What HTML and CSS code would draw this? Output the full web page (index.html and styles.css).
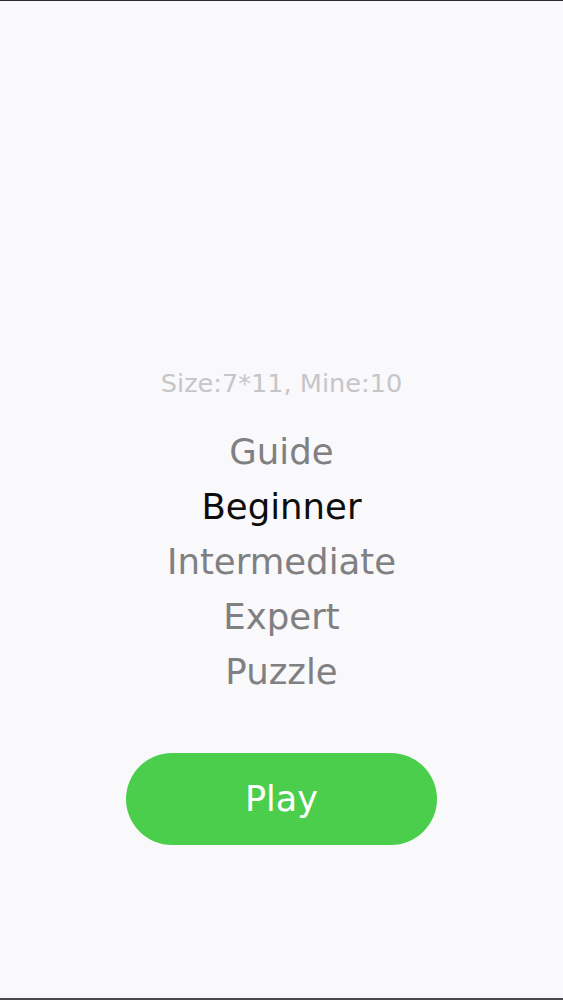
FILE: index.html
```html
<!DOCTYPE html>
<html>
<head>
<meta charset="utf-8">
<link rel="stylesheet" href="styles.css">
</head>
<body>
<div class="screen">
  <div class="info">Size:7*11, Mine:10</div>
  <ul class="levels">
    <li class="level">Guide</li>
    <li class="level active">Beginner</li>
    <li class="level">Intermediate</li>
    <li class="level">Expert</li>
    <li class="level">Puzzle</li>
  </ul>
  <button class="play">Play</button>
</div>
</body>
</html>
```
FILE: styles.css
```css
html, body {
  margin: 0;
  padding: 0;
  background: #f9f8fb;
}
.screen {
  height: 1000px;
  box-sizing: border-box;
  border-top: 1px solid #2c2c2e;
  border-bottom: 2px solid #4a4a4c;
  background: #f9f8fb;
  display: flex;
  flex-direction: column;
  align-items: center;
  padding-top: 367px;
  font-family: "DejaVu Sans", Verdana, sans-serif;
}
.info {
  font-size: 25.6px;
  line-height: 30px;
  color: #c6c6c8;
}
.levels {
  list-style: none;
  margin: 26px 0 0;
  padding: 0;
  text-align: center;
}
.level {
  font-size: 35.5px;
  line-height: 55px;
  color: #808082;
}
.level.active {
  color: #0d0d0d;
}
.play {
  margin-top: 54px;
  width: 311px;
  height: 92px;
  border: none;
  border-radius: 46px;
  background: #4ace4c;
  color: #ffffff;
  font-family: "DejaVu Sans", Verdana, sans-serif;
  font-size: 35px;
  padding: 0;
}
```
